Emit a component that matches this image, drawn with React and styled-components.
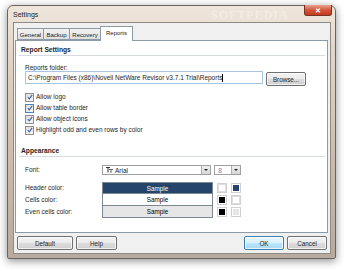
import React from 'react';
import styled, { createGlobalStyle } from 'styled-components';

const Global = createGlobalStyle`
  html, body {
    margin: 0;
    padding: 0;
    background: #ffffff;
  }
  body {
    width: 350px;
    height: 271px;
    overflow: hidden;
    font-family: "Liberation Sans", Arial, sans-serif;
    font-size: 6.5px;
    color: #1e1e1e;
  }
`;

const Window = styled.div`
  margin: 5px 0 0 7px;
  width: 329px;
  height: 254px;
  box-sizing: border-box;
  border: 1px solid #6b6560;
  border-radius: 6px 6px 2px 2px;
  background: linear-gradient(180deg, #efe6dc 0%, #e2d4c6 20%, #cdbcad 60%, #b9aa9e 100%);
  box-shadow: 0 2px 8px rgba(0, 0, 0, 0.45);
  display: flex;
  flex-direction: column;
  padding: 0 4px 4px 5px;
`;

const TitleBar = styled.div`
  height: 16px;
  display: flex;
  align-items: center;
  position: relative;
  font-size: 7px;
  color: #222;
`;

const Watermark = styled.span`
  position: absolute;
  left: 198px;
  top: 2px;
  font-family: "Liberation Serif", serif;
  font-size: 12px;
  letter-spacing: 1px;
  color: rgba(255, 255, 255, 0.35);
  font-weight: bold;
`;

const CloseButton = styled.div`
  position: absolute;
  right: -1px;
  top: -1px;
  width: 26px;
  height: 10px;
  border: 1px solid #7a2f22;
  border-top: none;
  border-radius: 0 0 3px 3px;
  background: linear-gradient(180deg, #e9a592 0%, #d4553b 50%, #c23a20 100%);
  display: flex;
  align-items: center;
  justify-content: center;
  color: #fff;
  font-size: 7px;
  font-weight: bold;
  line-height: 1;
`;

const Client = styled.div`
  flex: 1;
  background: #f0f0f0;
  border: 1px solid #8e8a86;
  display: flex;
  flex-direction: column;
  padding: 3px 2px 0 1px;
`;

const TabRow = styled.div`
  display: flex;
  align-items: flex-end;
  height: 14px;
  padding-left: 2px;
  position: relative;
  z-index: 1;
`;

const Tab = styled.div`
  width: ${p => p.$w}px;
  height: ${p => (p.$active ? '15px' : '12px')};
  box-sizing: border-box;
  padding-top: 2px;
  margin: ${p => (p.$active ? '0 -1px -1px -1px' : '0')};
  border: 1px solid #8c9aa6;
  border-left: ${p => (p.$first || p.$active ? '1px solid #8c9aa6' : 'none')};
  border-bottom: ${p => (p.$active ? 'none' : '1px solid #8c9aa6')};
  background: ${p => (p.$active ? '#ffffff' : 'linear-gradient(180deg, #f2f2f2, #dfdfdf)')};
  display: flex;
  align-items: flex-start;
  justify-content: center;
  font-size: 6px;
  line-height: 8px;
  white-space: nowrap;
`;

const Panel = styled.div`
  height: 187px;
  background: #ffffff;
  border: 1px solid #8c9aa6;
  padding: 4px 2px 0 3px;
  display: flex;
  flex-direction: column;
`;

const SectionTitle = styled.div`
  font-weight: bold;
  font-size: 6.7px;
  height: 10px;
  line-height: 10px;
  padding-left: 2px;
  border-bottom: 1px solid #d6dbe0;
  margin-bottom: ${p => p.$gap || 6}px;
`;

const Indent = styled.div`
  padding-left: 6px;
  display: flex;
  flex-direction: column;
`;

const Label = styled.div`
  height: 7px;
  line-height: 7px;
`;

const InputRow = styled.div`
  display: flex;
  align-items: flex-start;
  gap: 3px;
  margin-bottom: 7px;
`;

const TextInput = styled.div`
  width: 238px;
  height: 13px;
  box-sizing: border-box;
  border: 1px solid #a8c4e0;
  background: #fff;
  padding-left: 2px;
  line-height: 11px;
  white-space: nowrap;
  overflow: hidden;
  &::after {
    content: '';
    display: inline-block;
    width: 1px;
    height: 8px;
    background: #000;
    vertical-align: middle;
  }
`;

const Button = styled.div`
  width: ${p => p.$w}px;
  height: 14px;
  margin-top: ${p => p.$offset || 0}px;
  box-sizing: border-box;
  border: 1px solid ${p => (p.$primary ? '#3c7fb1' : '#707070')};
  border-radius: 2px;
  background: ${p =>
    p.$primary
      ? 'linear-gradient(180deg, #eaf6fd 0%, #d9f0fc 50%, #bee6fd 51%, #a7d9f5 100%)'
      : 'linear-gradient(180deg, #f2f2f2 0%, #ebebeb 50%, #dddddd 51%, #cfcfcf 100%)'};
  box-shadow: inset 0 0 0 1px rgba(255, 255, 255, 0.7);
  display: flex;
  align-items: center;
  justify-content: center;
  font-size: 6.3px;
`;

const CheckList = styled.div`
  display: flex;
  flex-direction: column;
  gap: 3px;
  margin-bottom: 12px;
`;

const CheckRow = styled.div`
  display: flex;
  align-items: center;
  gap: 2px;
  height: 8px;
  line-height: 8px;
`;

const Box = styled.div`
  width: 7px;
  height: 7px;
  border: 1px solid ${p => (p.$focus ? '#4a83c2' : '#8f8f8f')};
  background: linear-gradient(135deg, #dcdcdc, #f8f8f8);
  display: flex;
  align-items: center;
  justify-content: center;
`;

const FormGrid = styled.div`
  display: grid;
  grid-template-columns: 77px 111px 4px 10px 4px 10px;
  align-items: center;
`;

const RowLabel = styled.div`
  grid-column: 1;
  height: ${p => p.$h || 12}px;
  line-height: ${p => p.$h || 12}px;
  margin-bottom: ${p => p.$mb || 0}px;
`;

const SelectRow = styled.div`
  grid-column: 2 / span 5;
  display: flex;
  gap: 3px;
  align-items: center;
  height: 20px;
  margin-bottom: 2px;
`;

const Select = styled.div`
  width: ${p => p.$w}px;
  height: 10px;
  box-sizing: border-box;
  border: 1px solid #a0a0a0;
  background: #fff;
  display: flex;
  align-items: center;
  padding-left: 3px;
  gap: 2px;
  position: relative;
  color: ${p => (p.$muted ? '#7a7aa8' : '#1e1e1e')};
`;

const Arrow = styled.div`
  position: absolute;
  right: 0;
  top: 0;
  bottom: 0;
  width: 8px;
  border-left: 1px solid #b0b0b0;
  background: linear-gradient(180deg, #f0f0f0, #d6d6d6);
  display: flex;
  align-items: center;
  justify-content: center;
  &::after {
    content: '';
    border-left: 2px solid transparent;
    border-right: 2px solid transparent;
    border-top: 2px solid #222;
  }
`;

const SampleCell = styled.div`
  grid-column: 2;
  height: ${p => p.$h}px;
  box-sizing: border-box;
  border: 1px solid #7d8894;
  border-top: ${p => (p.$first ? '1px solid #7d8894' : 'none')};
  background: ${p => p.$bg};
  color: ${p => p.$fg};
  display: flex;
  align-items: center;
  justify-content: center;
  font-size: 6.3px;
`;

const Swatch = styled.div`
  grid-column: ${p => p.$col};
  width: 10px;
  height: 10px;
  box-sizing: border-box;
  border: 1px solid #d0d0d0;
  padding: 1px;
  background: #fff;
  &::after {
    content: '';
    display: block;
    width: 100%;
    height: 100%;
    background: ${p => p.$c};
    outline: ${p => (p.$c === '#ffffff' ? '1px solid #e0e0e0' : 'none')};
  }
`;

const Footer = styled.div`
  flex: 1;
  display: flex;
  align-items: center;
  padding: 0 1px 0 2px;
  gap: 3px;
`;

const Spacer = styled.div`
  flex: 1;
`;

function Check() {
  return (
    <svg width="6" height="6" viewBox="0 0 6 6">
      <path d="M0.8 3.2 L2.3 4.8 L5.2 0.9" fill="none" stroke="#3b5fa8" strokeWidth="1.1" />
    </svg>
  );
}

function TrueTypeIcon() {
  return (
    <svg width="7" height="6" viewBox="0 0 7 6">
      <path d="M0 0.5 H4 M2 0.5 V5.5" stroke="#333" strokeWidth="1" fill="none" />
      <path d="M3 2.5 H7 M5 2.5 V6" stroke="#666" strokeWidth="1" fill="none" />
    </svg>
  );
}

const tabs = [
  { name: 'General', w: 27 },
  { name: 'Backup', w: 26 },
  { name: 'Recovery', w: 31 },
];

const checks = [
  'Allow logo',
  'Allow table border',
  'Allow object icons',
  'Highlight odd and even rows by color',
];

const samples = [
  { label: 'Header color:', bg: '#26456b', fg: '#ffffff', text: '#ffffff', cell: '#26456b' },
  { label: 'Cells color:', bg: '#ffffff', fg: '#000000', text: '#000000', cell: '#ffffff' },
  { label: 'Even cells color:', bg: '#e6e6e6', fg: '#000000', text: '#000000', cell: '#e6e6e6' },
];

export default function App() {
  return (
    <>
      <Global />
      <Window>
        <TitleBar>
          Settings
          <Watermark>SOFTPEDIA</Watermark>
          <CloseButton>✕</CloseButton>
        </TitleBar>
        <Client>
          <TabRow>
            {tabs.map((t, i) => (
              <Tab key={t.name} $w={t.w} $first={i === 0}>
                {t.name}
              </Tab>
            ))}
            <Tab $active $w={33}>Reports</Tab>
          </TabRow>
          <Panel>
            <SectionTitle $gap={8}>Report Settings</SectionTitle>
            <Indent>
              <Label>Reports folder:</Label>
              <InputRow>
                <TextInput>C:\Program Files (x86)\Novell NetWare Revisor v3.7.1 Trial\Reports</TextInput>
                <Button $w={40} $offset={1}>Browse...</Button>
              </InputRow>
              <CheckList>
                {checks.map((c, i) => (
                  <CheckRow key={c}>
                    <Box $focus={i === 1}>
                      <Check />
                    </Box>
                    {c}
                  </CheckRow>
                ))}
              </CheckList>
            </Indent>
            <SectionTitle $gap={3}>Appearance</SectionTitle>
            <Indent>
              <FormGrid>
                <RowLabel $h={20} $mb={2}>Font:</RowLabel>
                <SelectRow>
                  <Select $w={111}>
                    <TrueTypeIcon />
                    Arial
                    <Arrow />
                  </Select>
                  <Select $w={27} $muted>
                    8
                    <Arrow />
                  </Select>
                </SelectRow>
                {samples.map((s, i) => (
                  <React.Fragment key={s.label}>
                    <RowLabel>{s.label}</RowLabel>
                    <SampleCell $first={i === 0} $h={12} $bg={s.bg} $fg={s.fg}>
                      Sample
                    </SampleCell>
                    <Swatch $col={4} $c={s.text} />
                    <Swatch $col={6} $c={s.cell} />
                  </React.Fragment>
                ))}
              </FormGrid>
            </Indent>
          </Panel>
          <Footer>
            <Button $w={56}>Default</Button>
            <Button $w={41}>Help</Button>
            <Spacer />
            <Button $w={40} $primary>OK</Button>
            <Button $w={40}>Cancel</Button>
          </Footer>
        </Client>
      </Window>
    </>
  );
}
